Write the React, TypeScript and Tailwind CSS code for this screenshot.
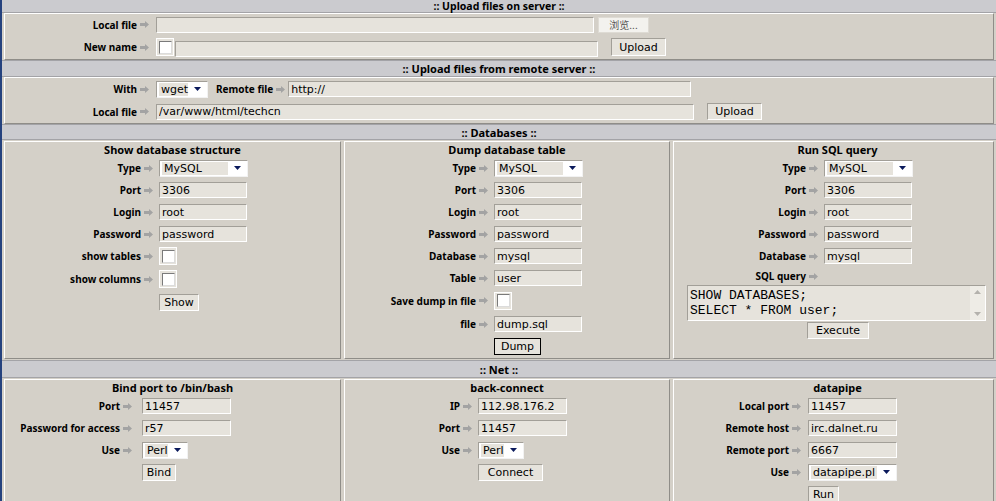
import React from "react";

const inset =
  "border border-t-[#a29f98] border-l-[#a29f98] border-b-white border-r-white";

function Arrow() {
  return (
    <svg width="9" height="7" viewBox="0 0 9 7" className="shrink-0">
      <path d="M0 2H5V0L9 3.5L5 7V5H0Z" fill="#a3a3a3" />
    </svg>
  );
}

function Label({ text }: { text: string }) {
  return (
    <span className="flex items-center gap-[3px] whitespace-nowrap">
      <span className="font-bold text-[10px] leading-none font-['Noto_Sans',sans-serif]">
        {text}
      </span>
      <Arrow />
    </span>
  );
}

function Row({
  label,
  lw,
  pad,
  h,
  children,
}: {
  label?: string;
  lw: string;
  pad: string;
  h: string;
  children?: React.ReactNode;
}) {
  return (
    <div className={`flex items-center ${h}`}>
      <div className={`${lw} shrink-0 flex justify-end`}>
        {label && <Label text={label} />}
      </div>
      <div className={`${pad} flex items-center`}>{children}</div>
    </div>
  );
}

function Input({ w, value = "" }: { w: string; value?: string }) {
  return (
    <input
      readOnly
      defaultValue={value}
      className={`${w} h-[16px] bg-[#e6e3dc] ${inset} text-[11px] leading-[14px] pl-[2px] text-black outline-none`}
    />
  );
}

function Select({ w, value }: { w: string; value: string }) {
  return (
    <div
      className={`${w} h-[17px] bg-white border border-t-[#a29f98] border-l-[#a29f98] border-b-[#f2f2f2] border-r-[#f2f2f2] flex items-center pl-[2px]`}
    >
      <span className="flex-1 h-[13px] bg-[#e6e3dc] text-[11px] leading-[13px] pl-[2px] whitespace-nowrap">
        {value}
      </span>
      <span className="w-[19px] flex justify-center">
        <svg width="7" height="4" viewBox="0 0 7 4">
          <path d="M0 0H7L3.5 4Z" fill="#0b1a5c" />
        </svg>
      </span>
    </div>
  );
}

function Button({
  w,
  h = "h-[17px]",
  text,
  dark = false,
}: {
  w: string;
  h?: string;
  text: string;
  dark?: boolean;
}) {
  return (
    <button
      className={`${w} ${h} bg-[#e6e3dc] text-[11px] leading-none text-black ${
        dark ? "border border-black" : inset
      }`}
    >
      {text}
    </button>
  );
}

function Check() {
  return (
    <div className="w-[18px] h-[18px] bg-[#e6e3dc] border border-white flex items-center justify-center shrink-0">
      <div className="w-[13px] h-[13px] bg-white border border-t-[#7a7a7a] border-l-[#7a7a7a] border-b-[#dcdcdc] border-r-[#dcdcdc]" />
    </div>
  );
}

function Header({ h, title }: { h: string; title: string }) {
  return (
    <div
      className={`${h} bg-[#cbcbcf] border-y border-y-[#a3a3a7] flex items-center justify-center font-bold text-[11px] leading-none font-['Noto_Sans',sans-serif]`}
    >
      {title}
    </div>
  );
}

const panel =
  "bg-[#d4d0c8] border border-t-white border-l-white border-r-[#8f8d88] border-b-[#8f8d88]";

function Title({ text, extra = "" }: { text: string; extra?: string }) {
  return (
    <div
      className={`h-[15px] flex items-center justify-center font-bold text-[11px] leading-none font-['Noto_Sans',sans-serif] ${extra}`}
    >
      {text}
    </div>
  );
}

export default function App() {
  return (
    <div className="w-[996px] h-[501px] overflow-hidden bg-[#d4d0c8] border-l-2 border-l-[#25427e] font-['DejaVu_Sans',sans-serif] text-black">
      {/* Upload files on server */}
      <div className="h-[13px] bg-[#cbcbcf] border-b border-b-[#a3a3a7] flex items-center justify-center font-bold text-[10.5px] leading-[12px] font-['Noto_Sans',sans-serif]">
        :: Upload files on server ::
      </div>
      <div className={`${panel} mx-[2px] h-[47px]`}>
        <Row label="Local file" lw="w-[144px]" pad="pl-[7px]" h="h-[21px]">
          <Input w="w-[438px]" />
          <button className="ml-[4px] w-[51px] h-[16px] bg-[#f3f2ee] border border-[#dedbd4] text-[10px] leading-none text-[#555] font-['Noto_Sans_CJK_SC',sans-serif]">
            浏览...
          </button>
        </Row>
        <Row label="New name" lw="w-[144px]" pad="pl-[7px]" h="h-[24px]">
          <Check />
          <div className="ml-[1px]">
            <Input w="w-[423px]" />
          </div>
          <div className="ml-[13px] flex">
            <Button w="w-[55px]" h="h-[18px]" text="Upload" />
          </div>
        </Row>
      </div>

      {/* Upload files from remote server */}
      <Header h="h-[17px]" title=":: Upload files from remote server ::" />
      <div className={`${panel} mx-[2px] h-[47px]`}>
        <Row label="With" lw="w-[144px]" pad="pl-[7px]" h="h-[22px]">
          <Select w="w-[52px]" value="wget" />
          <span className="ml-[8px] mr-[3px]">
            <Label text="Remote file" />
          </span>
          <Input w="w-[403px]" value="http://" />
        </Row>
        <Row label="Local file" lw="w-[144px]" pad="pl-[7px]" h="h-[23px]">
          <Input w="w-[538px]" value="/var/www/html/techcn" />
          <div className="ml-[13px] flex">
            <Button w="w-[55px]" text="Upload" />
          </div>
        </Row>
      </div>

      {/* Databases */}
      <Header h="h-[16px]" title=":: Databases ::" />
      <div className="grid grid-cols-[337px_326px_321px] gap-x-[3px] mx-[2px] py-[1px]">
        <div className={`${panel} h-[218px]`}>
          <Title text="Show database structure" />
          <Row label="Type" lw="w-[148px]" pad="pl-[6px]" h="h-[22px]">
            <Select w="w-[89px]" value="MySQL" />
          </Row>
          <Row label="Port" lw="w-[148px]" pad="pl-[6px]" h="h-[22px]">
            <Input w="w-[88px]" value="3306" />
          </Row>
          <Row label="Login" lw="w-[148px]" pad="pl-[6px]" h="h-[22px]">
            <Input w="w-[88px]" value="root" />
          </Row>
          <Row label="Password" lw="w-[148px]" pad="pl-[6px]" h="h-[22px]">
            <Input w="w-[88px]" value="password" />
          </Row>
          <Row label="show tables" lw="w-[148px]" pad="pl-[6px]" h="h-[22px]">
            <Check />
          </Row>
          <Row label="show columns" lw="w-[148px]" pad="pl-[6px]" h="h-[24px]">
            <Check />
          </Row>
          <Row lw="w-[148px]" pad="pl-[6px]" h="h-[22px]">
            <Button w="w-[40px]" text="Show" />
          </Row>
        </div>

        <div className={`${panel} h-[218px]`}>
          <Title text="Dump database table" />
          <Row label="Type" lw="w-[143px]" pad="pl-[6px]" h="h-[22px]">
            <Select w="w-[89px]" value="MySQL" />
          </Row>
          <Row label="Port" lw="w-[143px]" pad="pl-[6px]" h="h-[22px]">
            <Input w="w-[88px]" value="3306" />
          </Row>
          <Row label="Login" lw="w-[143px]" pad="pl-[6px]" h="h-[22px]">
            <Input w="w-[88px]" value="root" />
          </Row>
          <Row label="Password" lw="w-[143px]" pad="pl-[6px]" h="h-[22px]">
            <Input w="w-[88px]" value="password" />
          </Row>
          <Row label="Database" lw="w-[143px]" pad="pl-[6px]" h="h-[22px]">
            <Input w="w-[88px]" value="mysql" />
          </Row>
          <Row label="Table" lw="w-[143px]" pad="pl-[6px]" h="h-[22px]">
            <Input w="w-[88px]" value="user" />
          </Row>
          <Row label="Save dump in file" lw="w-[143px]" pad="pl-[6px]" h="h-[23px]">
            <Check />
          </Row>
          <Row label="file" lw="w-[143px]" pad="pl-[6px]" h="h-[24px]">
            <Input w="w-[88px]" value="dump.sql" />
          </Row>
          <Row lw="w-[143px]" pad="pl-[6px]" h="h-[20px]">
            <Button w="w-[47px]" text="Dump" dark />
          </Row>
        </div>

        <div className={`${panel} h-[218px]`}>
          <Title text="Run SQL query" extra="pl-[8px]" />
          <Row label="Type" lw="w-[144px]" pad="pl-[6px]" h="h-[22px]">
            <Select w="w-[89px]" value="MySQL" />
          </Row>
          <Row label="Port" lw="w-[144px]" pad="pl-[6px]" h="h-[22px]">
            <Input w="w-[88px]" value="3306" />
          </Row>
          <Row label="Login" lw="w-[144px]" pad="pl-[6px]" h="h-[22px]">
            <Input w="w-[88px]" value="root" />
          </Row>
          <Row label="Password" lw="w-[144px]" pad="pl-[6px]" h="h-[22px]">
            <Input w="w-[88px]" value="password" />
          </Row>
          <Row label="Database" lw="w-[144px]" pad="pl-[6px]" h="h-[22px]">
            <Input w="w-[88px]" value="mysql" />
          </Row>
          <Row label="SQL query" lw="w-[144px]" pad="pl-[6px]" h="h-[18px]" />
          <div className="ml-[13px] w-[299px] h-[36px] flex bg-[#e6e3dc] border border-t-[#a29f98] border-l-[#a29f98] border-b-white border-r-white">
            <div className="flex-1 pl-[2px] pt-[2px] font-['Liberation_Mono',monospace] text-[13px] leading-[15px] whitespace-pre overflow-hidden">
              {"SHOW DATABASES;\nSELECT * FROM user;"}
            </div>
            <div className="w-[15px] bg-[#eeece6] flex flex-col justify-between items-center py-[4px]">
              <svg width="7" height="4" viewBox="0 0 7 4">
                <path d="M0 4H7L3.5 0Z" fill="#b4b2ad" />
              </svg>
              <svg width="7" height="4" viewBox="0 0 7 4">
                <path d="M0 0H7L3.5 4Z" fill="#b4b2ad" />
              </svg>
            </div>
          </div>
          <div className="h-[18px] flex items-center pl-[133px]">
            <Button w="w-[62px]" text="Execute" />
          </div>
        </div>
      </div>

      {/* Net */}
      <Header h="h-[18px]" title=":: Net ::" />
      <div className="grid grid-cols-[337px_326px_321px] gap-x-[3px] mx-[2px] pt-[1px]">
        <div className={`${panel} h-[140px]`}>
          <Title text="Bind port to /bin/bash" />
          <Row label="Port" lw="w-[127px]" pad="pl-[10px]" h="h-[22px]">
            <Input w="w-[89px]" value="11457" />
          </Row>
          <Row label="Password for access" lw="w-[127px]" pad="pl-[10px]" h="h-[22px]">
            <Input w="w-[89px]" value="r57" />
          </Row>
          <Row label="Use" lw="w-[127px]" pad="pl-[10px]" h="h-[22px]">
            <Select w="w-[46px]" value="Perl" />
          </Row>
          <Row lw="w-[127px]" pad="pl-[10px]" h="h-[22px]">
            <Button w="w-[34px]" text="Bind" />
          </Row>
        </div>

        <div className={`${panel} h-[140px]`}>
          <Title text="back-connect" />
          <Row label="IP" lw="w-[127px]" pad="pl-[6px]" h="h-[22px]">
            <Input w="w-[89px]" value="112.98.176.2" />
          </Row>
          <Row label="Port" lw="w-[127px]" pad="pl-[6px]" h="h-[22px]">
            <Input w="w-[89px]" value="11457" />
          </Row>
          <Row label="Use" lw="w-[127px]" pad="pl-[6px]" h="h-[22px]">
            <Select w="w-[46px]" value="Perl" />
          </Row>
          <Row lw="w-[127px]" pad="pl-[6px]" h="h-[22px]">
            <Button w="w-[65px]" text="Connect" />
          </Row>
        </div>

        <div className={`${panel} h-[140px]`}>
          <Title text="datapipe" extra="pl-[8px]" />
          <Row label="Local port" lw="w-[127px]" pad="pl-[7px]" h="h-[22px]">
            <Input w="w-[89px]" value="11457" />
          </Row>
          <Row label="Remote host" lw="w-[127px]" pad="pl-[7px]" h="h-[22px]">
            <Input w="w-[89px]" value="irc.dalnet.ru" />
          </Row>
          <Row label="Remote port" lw="w-[127px]" pad="pl-[7px]" h="h-[22px]">
            <Input w="w-[89px]" value="6667" />
          </Row>
          <Row label="Use" lw="w-[127px]" pad="pl-[7px]" h="h-[22px]">
            <Select w="w-[89px]" value="datapipe.pl" />
          </Row>
          <Row lw="w-[127px]" pad="pl-[7px]" h="h-[22px]">
            <Button w="w-[31px]" h="h-[16px]" text="Run" />
          </Row>
        </div>
      </div>
    </div>
  );
}
